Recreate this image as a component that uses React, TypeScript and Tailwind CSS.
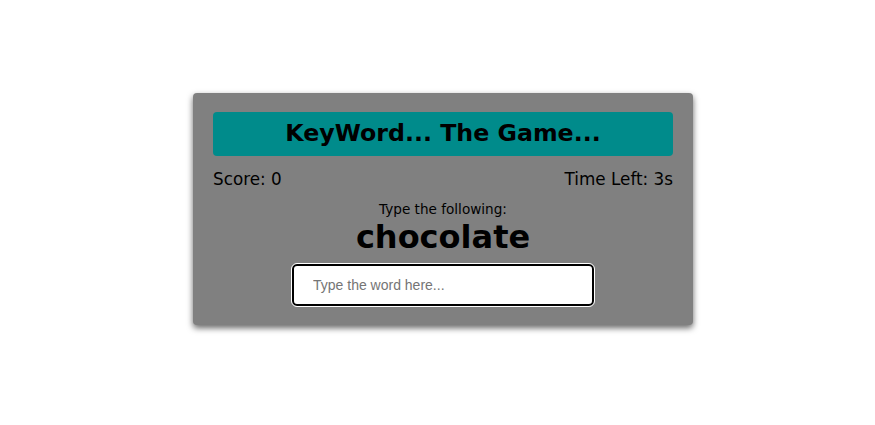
export default function App() {
  return (
    <div className="w-full h-[425px] bg-white flex justify-center pl-[11px] pt-[93px] font-['DejaVu_Sans',sans-serif]">
      <div className="w-[500px] h-[232px] bg-[#808080] rounded-[4px] shadow-[0_3px_6px_rgba(0,0,0,0.6)] px-5 pt-[19px] flex flex-col">
        {/* Title */}
        <div className="h-[44px] bg-[#008b8b] rounded-[4px] flex items-center justify-center">
          <h1 className="text-[23.7px] font-bold text-black">KeyWord... The Game...</h1>
        </div>

        {/* Score / timer */}
        <div className="flex justify-between mt-[12px] text-[16.8px] text-black leading-[22px]">
          <span>Score: 0</span>
          <span>Time Left: 3s</span>
        </div>

        {/* Word */}
        <div className="flex flex-col items-center mt-[11px]">
          <p className="text-[13.6px] leading-[17px] text-black">Type the following:</p>
          <p className="text-[32px] font-bold leading-[38px] text-black">chocolate</p>
          <input
            type="text"
            placeholder="Type the word here..."
            className="mt-[8px] w-[302px] h-[42px] border-2 border-black rounded-[5px] bg-white px-[19px] text-[14px] font-['Liberation_Sans',sans-serif] placeholder:text-[#757575] outline outline-1 outline-white"
          />
        </div>
      </div>
    </div>
  );
}
